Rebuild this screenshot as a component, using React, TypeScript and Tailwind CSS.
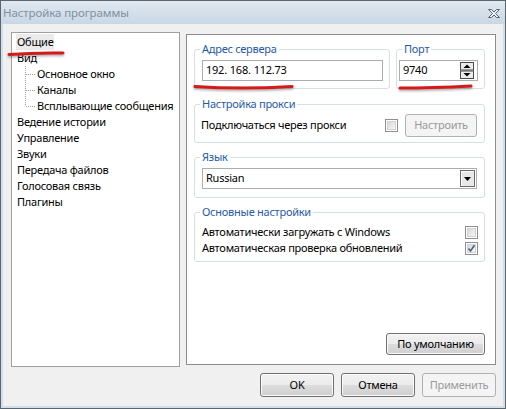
import React from "react";

const tree: { label: string; child?: boolean; last?: boolean; active?: boolean }[] = [
    {label: "Общие", active: true},
    {label: "Вид"},
    {label: "Основное окно", child: true},
    {label: "Каналы", child: true},
    {label: "Всплывающие сообщения", child: true, last: true},
    {label: "Ведение истории"},
    {label: "Управление"},
    {label: "Звуки"},
    {label: "Передача файлов"},
    {label: "Голосовая связь"},
    {label: "Плагины"},
];

function WinButton({children, disabled, className = ""}: { children: React.ReactNode; disabled?: boolean; className?: string }) {
    return (
        <button
            type="button"
            disabled={disabled}
            className={
                disabled
                    ? `flex items-center justify-center rounded-[3px] border border-[#adb2b5] bg-[#f4f4f4] text-[#9a9a9a] ${className}`
                    : `flex items-center justify-center rounded-[3px] border border-[#707070] bg-[linear-gradient(#f2f2f2_0%,#ebebeb_50%,#dddddd_51%,#cfcfcf_100%)] text-black shadow-[inset_0_0_0_1px_#fbfbfb] ${className}`
            }
        >
            {children}
        </button>
    );
}

function CheckBox({checked}: { checked?: boolean }) {
    return (
        <div className="w-[13px] h-[13px] border border-[#8f8f8f] bg-white p-[1px] shrink-0">
            <div className="w-full h-full border border-[#d2d2d2] bg-[linear-gradient(135deg,#d8d8d8,#f7f7f7)] relative">
                {checked && (
                    <svg width="9" height="9" viewBox="0 0 9 9" className="absolute -left-[1px] -top-[1px]">
                        <path d="M1.5 4.5 L3.5 7 L7.5 1.2" fill="none" stroke="#4c5d8c" strokeWidth="1.6"/>
                    </svg>
                )}
            </div>
        </div>
    );
}

function Group({title, className = "", legendClass = "ml-[5px]", children}: {
    title: string;
    className?: string;
    legendClass?: string;
    children: React.ReactNode
}) {
    return (
        <fieldset className={`border border-[#d5dfe5] rounded-[3px] ${className}`}>
            <legend className={`px-[2px] leading-[16px] text-[#1f5aa8] ${legendClass}`}>{title}</legend>
            {children}
        </fieldset>
    );
}

export default function App() {
    return (
        <div className="relative w-[506px] h-[409px] flex flex-col border border-[#5b6570] bg-[#d3deea] font-['Noto_Sans',sans-serif] text-[11px] tracking-[-0.25px] text-black select-none whitespace-nowrap">
            {/* title bar */}
            <div className="h-[23px] flex items-center justify-between pl-[2px] pr-[5px] bg-[linear-gradient(#e0e8f0,#c9d7e5)]">
                <span className="text-[#8091a2] text-[11.5px] tracking-[-0.1px] leading-none">Настройка программы</span>
                <svg width="12" height="9" viewBox="0 0 12 9" className="mt-[1px]">
                    <polygon
                        points="0.5,0.5 3.5,0.5 6,3 8.5,0.5 11.5,0.5 7.5,4.5 11.5,8.5 8.5,8.5 6,6 3.5,8.5 0.5,8.5 4.5,4.5"
                        fill="#eef1f4"
                        stroke="#5d626a"
                        strokeWidth="1"
                    />
                </svg>
            </div>

            <div className="flex-1 mx-[2px] mb-[2px] bg-[#f0f0f0] pl-[8px] pr-[7px] pt-[8px] flex flex-col">
                <div className="flex gap-[6px]">
                    {/* settings tree */}
                    <div className="w-[170px] h-[335px] border border-[#a0a0a0] bg-white pt-[1px] pl-[4px]">
                        {tree.map((item) => (
                            <div key={item.label} className="flex h-[16px] items-center leading-[16px]">
                                {item.child && (
                                    <svg width="11" height="16" className="ml-[9px] shrink-0">
                                        <line x1="0.5" y1="0" x2="0.5" y2={item.last ? 8 : 16} stroke="#a0a0a0" strokeDasharray="1 1"/>
                                        <line x1="1" y1="8.5" x2="10" y2="8.5" stroke="#a0a0a0" strokeDasharray="1 1"/>
                                    </svg>
                                )}
                                <span className={`px-[1px] ${item.active ? "bg-[#ebebeb]" : ""}`}>{item.label}</span>
                            </div>
                        ))}
                    </div>

                    {/* settings page */}
                    <div className="w-[310px] h-[331px] mt-[2px] border border-[#898c95] bg-white pl-[7px] pr-[10px] pt-[6px] flex flex-col">
                        <div className="flex gap-[6px]">
                            <Group title="Адрес сервера" className="w-[196px] h-[48px] pl-[7px] pr-[6px]" legendClass="-ml-[2px]">
                                <div className="mt-[3px] h-[21px] border border-[#abadb3] flex items-center pl-[3px]">
                                    <span>192.</span>
                                    <span className="ml-[3px]">168.</span>
                                    <span className="ml-[3px]">112.73</span>
                                </div>
                            </Group>
                            <Group title="Порт" className="w-[89px] h-[48px] pl-[2px] pr-[6px]" legendClass="ml-[3px]">
                                <div className="mt-[3px] h-[21px] border border-[#abadb3] flex items-center justify-between pl-[3px] pr-[3px]">
                                    <span>9740</span>
                                    <svg width="14" height="17" viewBox="0 0 14 17">
                                        <rect x="0.5" y="0.5" width="13" height="7.5" fill="#ececec" stroke="#4a4a4a"/>
                                        <rect x="0.5" y="9" width="13" height="7.5" fill="#ececec" stroke="#4a4a4a"/>
                                        <polygon points="3.5,6 10.5,6 7,2.5" fill="#000"/>
                                        <polygon points="3.5,11 10.5,11 7,14.5" fill="#000"/>
                                    </svg>
                                </div>
                            </Group>
                        </div>

                        <Group title="Настройка прокси" className="mt-[7px] h-[47px] pl-[6px] pr-[7px]" legendClass="-ml-[1px]">
                            <div className="mt-[2px] h-[23px] flex items-center">
                                <span className="flex-1">Подключаться через прокси</span>
                                <CheckBox/>
                                <WinButton disabled className="ml-[7px] w-[72px] h-[23px]">Настроить</WinButton>
                            </div>
                        </Group>

                        <Group title="Язык" className="mt-[6px] h-[49px] pl-[7px] pr-[7px]" legendClass="-ml-[2px]">
                            <div className="mt-[3px] h-[21px] border border-[#abadb3] flex items-center justify-between pl-[3px] pr-[1px]">
                                <span>Russian</span>
                                <div className="w-[15px] h-[17px] border border-[#6a6a6a] bg-[#e8e8e8] shadow-[inset_1px_1px_0_#ffffff] flex items-center justify-center">
                                    <svg width="7" height="4" viewBox="0 0 7 4">
                                        <polygon points="0,0 7,0 3.5,4" fill="#000"/>
                                    </svg>
                                </div>
                            </div>
                        </Group>

                        <Group title="Основные настройки" className="mt-[6px] h-[58px] pl-[7px] pr-[6px]" legendClass="-ml-[2px]">
                            <div className="mt-[4px]">
                                <div className="h-[16px] flex items-center justify-between">
                                    <span>Автоматически загружать с Windows</span>
                                    <CheckBox/>
                                </div>
                                <div className="h-[16px] flex items-center justify-between">
                                    <span>Автоматическая проверка обновлений</span>
                                    <CheckBox checked/>
                                </div>
                            </div>
                        </Group>

                        <div className="mt-auto mb-[9px] flex justify-end">
                            <WinButton className="w-[99px] h-[22px]">По умолчанию</WinButton>
                        </div>
                    </div>
                </div>

                <div className="mt-[6px] flex justify-end gap-[7px]">
                    <WinButton className="w-[74px] h-[24px]">OK</WinButton>
                    <WinButton className="w-[74px] h-[24px]">Отмена</WinButton>
                    <WinButton disabled className="w-[74px] h-[24px]">Применить</WinButton>
                </div>
            </div>

            {/* red marker strokes over the form */}
            <svg width="506" height="409" className="absolute left-0 top-0 pointer-events-none">
                <defs>
                    <filter id="markShadow" x="-10%" y="-200%" width="120%" height="500%">
                        <feDropShadow dx="0" dy="1.5" stdDeviation="1" floodColor="#000" floodOpacity="0.35"/>
                    </filter>
                </defs>
                <g fill="none" stroke="#d21b1b" strokeWidth="3" strokeLinecap="round" filter="url(#markShadow)">
                    <path d="M8 53.5 Q34 51.5 62 52"/>
                    <path d="M194 85.5 Q240 88.5 291 85.5"/>
                    <path d="M399 87 Q432 87 470 85"/>
                </g>
            </svg>
        </div>
    );
}
